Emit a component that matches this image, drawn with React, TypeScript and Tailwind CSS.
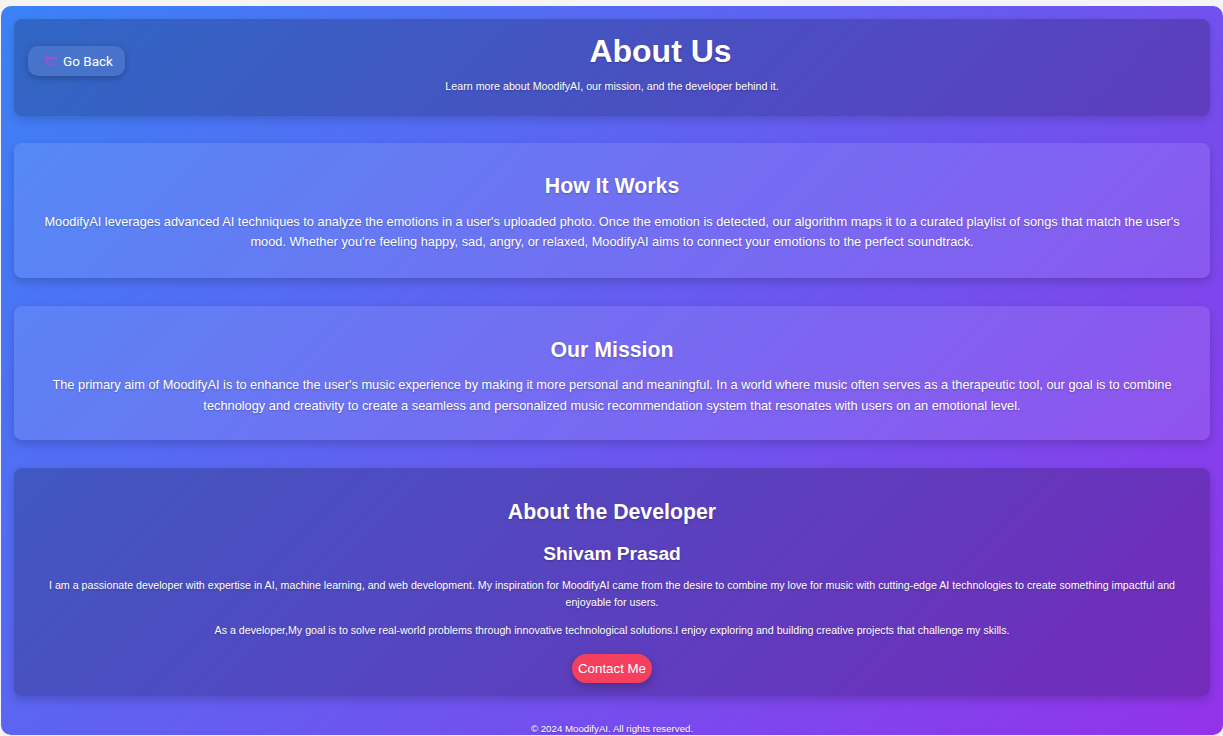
import React from 'react'

const sans = { fontFamily: '"Liberation Sans", Arial, sans-serif' }

function BackEmoji() {
  return (
    <span className="flex flex-col items-center w-[14px] leading-none [text-shadow:none]">
      <svg width="14" height="8" viewBox="0 0 14 8">
        <path d="M0.5 4 L5 0.5 L5 2.7 L13.5 2.7 L13.5 5.3 L5 5.3 L5 7.5 Z" fill="#9d4fd8" />
      </svg>
      <span className="text-[4.5px] font-bold text-[#9d4fd8] mt-[1px] tracking-tight">BACK</span>
    </span>
  )
}

function Card({ dark, children }: { dark?: boolean; children: React.ReactNode }) {
  return (
    <section
      className={`rounded-lg px-[30px] text-center text-white shadow-[0_4px_10px_rgba(0,0,0,0.18)] ${
        dark ? 'bg-black/20' : 'bg-white/10'
      }`}
    >
      {children}
    </section>
  )
}

export default function App() {
  return (
    <div className="h-[736px] bg-[#f4f4f4] pt-[6px] pl-[1px] overflow-hidden" style={sans}>
      <div className="h-[729px] rounded-[10px] bg-[linear-gradient(135deg,#3b82f6,#9333ea)] px-[13px] pt-[13px] text-white [text-shadow:0_1px_2px_rgba(0,0,0,0.25)]">
        {/* Header */}
        <header className="rounded-lg bg-black/20 px-[14px] pt-[13px] h-[97px] shadow-[0_4px_10px_rgba(0,0,0,0.15)]">
          <div className="flex items-start">
            <button
              className="flex items-center gap-[6px] h-[30px] w-[97px] pl-[15px] mt-[14px] rounded-[10px] bg-white/10 shadow-[0_2px_6px_rgba(0,0,0,0.25)] text-[13.5px] text-white"
              style={{ fontFamily: 'Roboto, "Liberation Sans", sans-serif' }}
            >
              <BackEmoji />
              Go Back
            </button>
            <h1 className="flex-1 text-center text-[32px] font-bold leading-[38px]">About Us</h1>
          </div>
          <p className="text-center text-[10.7px] leading-[13px] mt-[4px]">
            Learn more about MoodifyAI, our mission, and the developer behind it.
          </p>
        </header>

        <div className="mt-[27px] flex flex-col gap-[28px]">
          <Card>
            <div className="pt-[31px] pb-[26px]">
              <h2 className="text-[21.3px] font-bold leading-[25px]">How It Works</h2>
              <p className="mt-[13px] text-[12.8px] leading-5">
                MoodifyAI leverages advanced AI techniques to analyze the emotions in a user's uploaded photo. Once the emotion is detected, our algorithm maps it to a curated playlist of songs that match the user's mood. Whether you're feeling happy, sad, angry, or relaxed, MoodifyAI aims to connect your emotions to the perfect soundtrack.
              </p>
            </div>
          </Card>

          <Card>
            <div className="pt-[32px] pb-[24px]">
              <h2 className="text-[21.3px] font-bold leading-[24px]">Our Mission</h2>
              <p className="mt-[12px] text-[12.8px] leading-[21px]">
                The primary aim of MoodifyAI is to enhance the user's music experience by making it more personal and meaningful. In a world where music often serves as a therapeutic tool, our goal is to combine technology and creativity to create a seamless and personalized music recommendation system that resonates with users on an emotional level.
              </p>
            </div>
          </Card>

          <Card dark>
            <div className="pt-[32px] pb-[13px]">
              <h2 className="text-[21.3px] font-bold leading-[24px]">About the Developer</h2>
              <h3 className="mt-[19px] text-[19.2px] font-bold leading-[22px]">Shivam Prasad</h3>
              <p className="mt-[12px] text-[10.66px] leading-[17px]">
                I am a passionate developer with expertise in AI, machine learning, and web development. My inspiration for MoodifyAI came from the desire to combine my love for music with cutting-edge AI technologies to create something impactful and enjoyable for users.
              </p>
              <p className="mt-[11px] text-[10.66px] leading-[17px]">
                As a developer,My goal is to solve real-world problems through innovative technological solutions.I enjoy exploring and building creative projects that challenge my skills.
              </p>
              <button className="mt-[15px] h-[29px] px-[6px] rounded-full bg-[#f43f5e] text-[13.3px] text-white shadow-[0_3px_8px_rgba(0,0,0,0.25)]">
                Contact Me
              </button>
            </div>
          </Card>
        </div>

        <footer className="mt-[27px] text-center text-[9.7px] leading-[12px]">
          © 2024 MoodifyAI. All rights reserved.
        </footer>
      </div>
    </div>
  )
}
